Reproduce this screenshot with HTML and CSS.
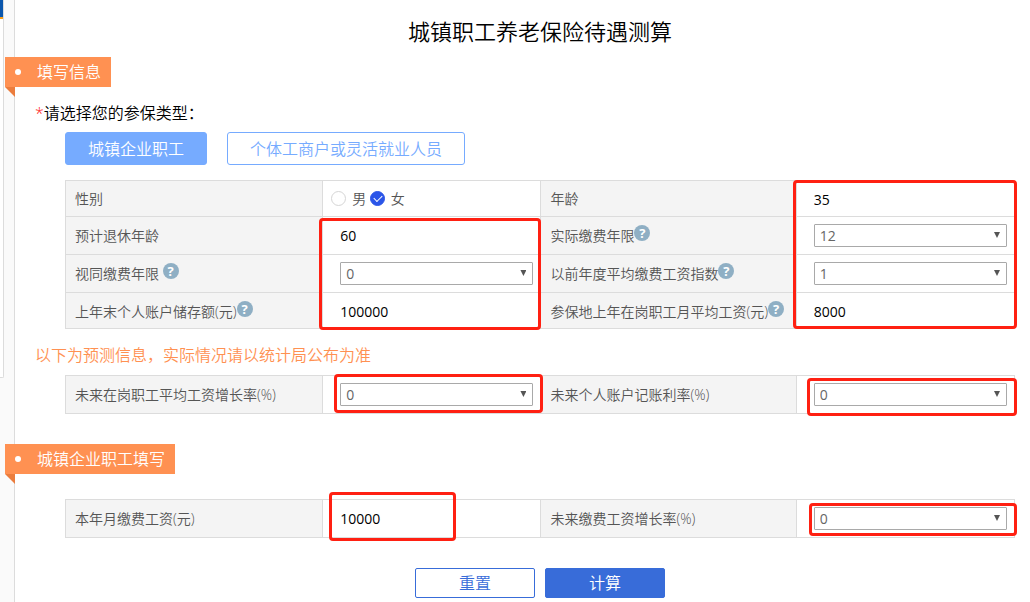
FILE: index.html
```html
<!DOCTYPE html>
<html lang="zh-CN">
<head>
<meta charset="utf-8">
<title>城镇职工养老保险待遇测算</title>
<link rel="stylesheet" href="styles.css">
</head>
<body>
<div class="page">
  <aside class="rail"><div class="rail-card"></div></aside>
  <main class="main">
    <h1 class="title">城镇职工养老保险待遇测算</h1>
    <form class="form">
      <h2 class="ribbon">填写信息</h2>
      <p class="prompt"><span class="required">*</span>请选择您的参保类型：</p>
      <div class="types">
        <button type="button" class="type type-active">城镇企业职工</button>
        <button type="button" class="type">个体工商户或灵活就业人员</button>
      </div>

      <div class="sheet">
        <table class="grid">
          <colgroup><col class="col-name"><col class="col-field"><col class="col-name-right"><col class="col-field"></colgroup>
          <tr>
            <th scope="row">性别</th>
            <td class="radios">
              <input class="radio" type="radio" name="sex" id="male"><label for="male">男</label>
              <input class="radio" type="radio" name="sex" id="female" checked><label for="female">女</label>
            </td>
            <th scope="row"><label for="age">年龄</label></th>
            <td><input class="text" id="age" type="text" value="35"></td>
          </tr>
          <tr class="tall">
            <th scope="row"><label for="retire">预计退休年龄</label></th>
            <td><input class="text" id="retire" type="text" value="60"></td>
            <th scope="row"><label for="paid">实际缴费年限</label><button type="button" class="help">?</button></th>
            <td><div class="pick"><select id="paid"><option>12</option></select></div></td>
          </tr>
          <tr class="tall">
            <th scope="row"><label for="deemed">视同缴费年限</label> <button type="button" class="help">?</button></th>
            <td><div class="pick"><select id="deemed"><option>0</option></select></div></td>
            <th scope="row"><label for="index">以前年度平均缴费工资指数</label><button type="button" class="help">?</button></th>
            <td><div class="pick"><select id="index"><option>1</option></select></div></td>
          </tr>
          <tr>
            <th scope="row"><label for="balance">上年末个人账户储存额(元)</label><button type="button" class="help">?</button></th>
            <td><input class="text" id="balance" type="text" value="100000"></td>
            <th scope="row"><label for="average">参保地上年在岗职工月平均工资(元)</label><button type="button" class="help">?</button></th>
            <td><input class="text" id="average" type="text" value="8000"></td>
          </tr>
        </table>
        <div class="mark mark-personal"></div>
        <div class="mark mark-history"></div>
      </div>

      <p class="notice">以下为预测信息，实际情况请以统计局公布为准</p>
      <div class="sheet">
        <table class="grid">
          <colgroup><col class="col-name"><col class="col-field"><col class="col-name-right"><col class="col-field"></colgroup>
          <tr class="tall">
            <th scope="row"><label for="growth">未来在岗职工平均工资增长率(%)</label></th>
            <td><div class="pick"><select id="growth"><option>0</option></select></div></td>
            <th scope="row"><label for="interest">未来个人账户记账利率(%)</label></th>
            <td><div class="pick"><select id="interest"><option>0</option></select></div></td>
          </tr>
        </table>
        <div class="mark mark-growth"></div>
        <div class="mark mark-interest"></div>
      </div>

      <h2 class="ribbon ribbon-second">城镇企业职工填写</h2>
      <div class="sheet">
        <table class="grid">
          <colgroup><col class="col-name"><col class="col-field"><col class="col-name-right"><col class="col-field"></colgroup>
          <tr class="tall">
            <th scope="row"><label for="wage">本年月缴费工资(元)</label></th>
            <td><input class="text" id="wage" type="text" value="10000"></td>
            <th scope="row"><label for="wagegrowth">未来缴费工资增长率(%)</label></th>
            <td><div class="pick"><select id="wagegrowth"><option>0</option></select></div></td>
          </tr>
        </table>
        <div class="mark mark-wage"></div>
        <div class="mark mark-wagegrowth"></div>
      </div>

      <div class="actions">
        <button type="reset" class="action">重置</button>
        <button type="button" class="action action-primary">计算</button>
      </div>
    </form>
  </main>
</div>
</body>
</html>
```
FILE: styles.css
```css
* {
  box-sizing: border-box;
}

body {
  margin: 0;
  background: #fff;
  color: #000;
  font: 350 16px/24px "Open Sans", "Noto Sans CJK SC", sans-serif;
}

button,
input,
select {
  margin: 0;
  padding: 0;
  font: inherit;
}

.page {
  display: flex;
  min-height: 100vh;
}

/* Strip of the surrounding site to the left of the form */
.rail {
  flex: none;
  width: 15px;
  background: #fafafa;
  border-right: 1px solid #dcdcdc;
}

.rail-card {
  width: 4px;
  height: 378px;
  border: solid #dcdcdc;
  border-width: 0 1px 1px 0;
  border-bottom-right-radius: 2px;
  background: linear-gradient(#0a56ac 17px, #f9a01b 17px, #f9a01b 19px, #fff 19px);
}

.main {
  flex: 1;
  min-width: 0;
  padding: 0 15px 4px 0;
}

.title {
  margin: 0 0 0 50px;
  padding: 15px 0 10px;
  font-size: 22px;
  font-weight: 350;
  line-height: 32px;
  text-align: center;
}

.ribbon {
  position: relative;
  display: flex;
  align-items: center;
  gap: 16px;
  width: max-content;
  height: 30px;
  margin: 0 0 0 -10px;
  padding: 0 10px;
  background: #ff9152;
  color: #fff;
  font-size: 16px;
  font-weight: 350;
}

.ribbon::before {
  content: "";
  width: 6px;
  height: 6px;
  border-radius: 50%;
  background: #fff;
}

.ribbon::after {
  content: "";
  position: absolute;
  left: 0;
  top: 100%;
  width: 10px;
  height: 10px;
  background: #eb7d3d;
  clip-path: polygon(0 0, 100% 0, 100% 100%);
}

.ribbon-second {
  margin-top: 30px;
  margin-bottom: 25px;
}

.prompt {
  margin: 14px 0 7px 20px;
}

.required {
  color: #f22;
}

.types {
  display: flex;
  gap: 20px;
  margin: 0 0 15px 50px;
}

.type {
  height: 33px;
  padding: 0 22px;
  border: 1px solid #76abff;
  border-radius: 3px;
  background: #fff;
  color: #76abff;
}

.type-active {
  background: #76abff;
  color: #fff;
}

.sheet {
  position: relative;
  margin-left: 50px;
}

.grid {
  width: 100%;
  table-layout: fixed;
  border-collapse: collapse;
  font-size: 14px;
  line-height: 20px;
  color: #555;
}

.col-name {
  width: 27.1%;
}

.col-name-right {
  width: 26.9%;
}

.col-field {
  width: 23%;
}

.grid th,
.grid td {
  height: 36px;
  padding: 1px 0 0;
  border: 1px solid #dcdcdc;
  vertical-align: middle;
}

.grid .tall th,
.grid .tall td {
  height: 38px;
  padding-top: 0;
}

.grid th {
  padding-left: 9px;
  background: #f4f4f4;
  font-weight: 350;
  text-align: left;
  white-space: nowrap;
}

.grid td {
  padding-left: 17px;
  padding-right: 7px;
}

.grid td.radios {
  padding-left: 8px;
}

.text {
  display: block;
  width: 100%;
  height: 24px;
  border: 0;
  background: transparent;
  color: #000;
  font-weight: 400;
}

.pick {
  position: relative;
}

.pick select {
  display: block;
  width: 100%;
  height: 23px;
  padding: 0 20px 0 5px;
  appearance: none;
  border: 1px solid #a9a9a9;
  border-radius: 1px;
  background: #fff;
  color: #666;
  font-weight: 400;
}

.pick::after {
  content: "";
  position: absolute;
  right: 7px;
  top: 8px;
  width: 6px;
  height: 6px;
  background: #555;
  clip-path: polygon(0 0, 100% 0, 50% 100%);
  pointer-events: none;
}

.help {
  width: 16px;
  height: 16px;
  border: 0;
  border-radius: 50%;
  background: #8fafc4;
  color: #fff;
  font-size: 13px;
  font-weight: 700;
  line-height: 16px;
  vertical-align: 3px;
}

.radios label {
  margin-left: 6px;
}

.radio {
  position: relative;
  width: 15px;
  height: 15px;
  appearance: none;
  border: 1px solid #d5d5d5;
  border-radius: 50%;
  background: #fff;
  vertical-align: -2px;
}

.radio:checked {
  border-color: #2b55e8;
  background: #2b55e8;
}

.radio:checked::after {
  content: "";
  position: absolute;
  left: 3px;
  top: 3px;
  width: 7px;
  height: 4px;
  border: solid #fff;
  border-width: 0 0 1px 1px;
  transform: rotate(-45deg);
}

.notice {
  margin: 14px 0 8px 20px;
  color: #ff9152;
}

.actions {
  display: flex;
  justify-content: center;
  gap: 10px;
  margin: 30px 0 0 50px;
}

.action {
  width: 120px;
  height: 30px;
  border: 1px solid #386cd9;
  border-radius: 2px;
  background: #fff;
  color: #386cd9;
}

.action-primary {
  background: #386cd9;
  color: #fff;
}

/* Red highlight frames laid over the fields */
.mark {
  position: absolute;
  border: 3px solid #ff2012;
  border-radius: 4px;
  pointer-events: none;
}

.mark-personal {
  left: calc(27% - 3px);
  right: calc(50% - 1px);
  top: 38px;
  bottom: -1px;
}

.mark-history {
  left: calc(77% - 4px);
  right: -2px;
  top: 0;
  bottom: 0;
}

.mark-growth {
  left: calc(27% + 12px);
  right: calc(50% - 3px);
  top: -1px;
  bottom: 1px;
}

.mark-interest {
  left: calc(77% + 10px);
  right: -2px;
  top: 3px;
  bottom: -2px;
}

.mark-wage {
  left: calc(27% + 7px);
  width: 127px;
  top: -7px;
  bottom: -3px;
}

.mark-wagegrowth {
  left: calc(77% + 12px);
  right: -2px;
  top: 4px;
  bottom: 2px;
}
```
